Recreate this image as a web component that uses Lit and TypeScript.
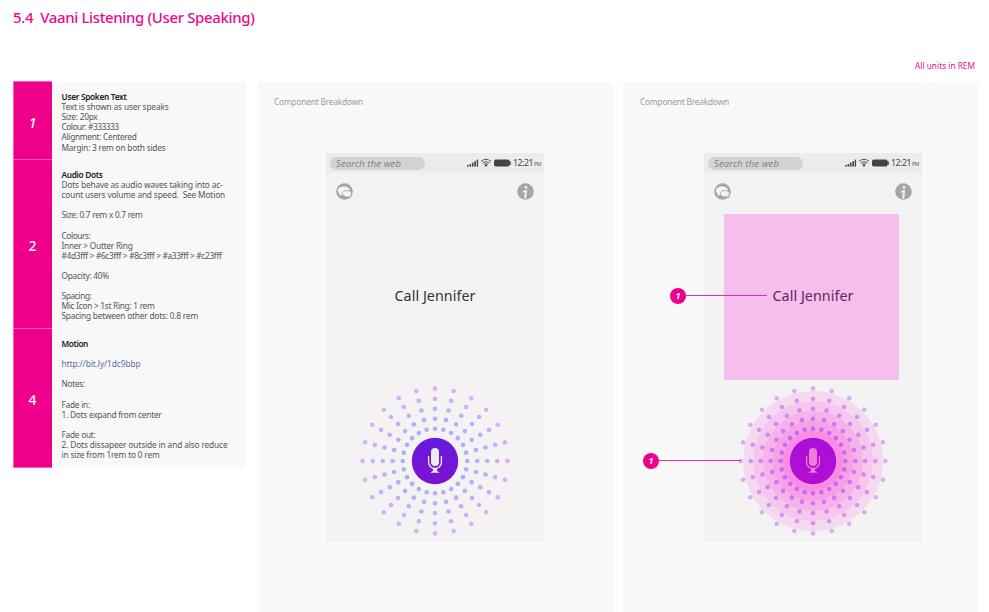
import { LitElement, html, svg, css } from "lit";
import { customElement, property } from "lit/decorators.js";

/** One line of text, tracked so that it spans the given width. */
@customElement("fit-text")
class FitText extends LitElement {
  @property({ type: Number }) w = 0;
  @property() text = "";
  static styles = css`
    :host { display: block; white-space: pre; }
    span { display: inline-block; }
  `;
  render() {
    return html`<span>${this.text}</span>`;
  }
  updated() {
    const s = this.renderRoot.querySelector("span") as HTMLElement;
    s.style.letterSpacing = "0px";
    const gap = (this.w - s.getBoundingClientRect().width) / this.text.length;
    s.style.letterSpacing = gap.toFixed(3) + "px";
  }
}

type Line = [string, number, string?];

@customElement("spec-row")
class SpecRow extends LitElement {
  @property() num = "";
  @property({ attribute: false }) lines: Line[] = [];
  static styles = css`
    :host { display: grid; grid-template-columns: 38px 1fr; box-sizing: border-box; }
    .num {
      background: #ef008c; color: #fff; display: flex; align-items: center; justify-content: center;
      font-size: 14px; font-weight: 500; box-sizing: border-box; padding-top: 3px;
      box-shadow: 0 0 0 1px #f562b6; clip-path: inset(-1px -0.4px -1px -0.4px);
    }
    .num.slant { font-style: italic; }
    .body { padding: 10.2px 0 0 10px; color: #555; font-size: 8.3px; line-height: 10.07px; }
    fit-text { height: 10.07px; }
    .head { font-weight: 600; color: #222; }
    .link { color: #5a6cae; }
  `;
  render() {
    return html`<div class="num ${this.num === "1" ? "slant" : ""}">${this.num}</div>
      <div class="body">
        ${this.lines.map(([t, w, c]) => html`<fit-text class=${c ?? ""} .text=${t} .w=${w}></fit-text>`)}
      </div>`;
  }
}

const RINGS = [
  { r: 32.3, c: "#4d3fff", tinted: "#c76aee" },
  { r: 42.3, c: "#6c3fff", tinted: "#cd78ee" },
  { r: 52.3, c: "#8c3fff", tinted: "#d286f0" },
  { r: 62.3, c: "#a33fff", tinted: "#d793f2" },
  { r: 72.4, c: "#c23fff", tinted: "#dea9f6" },
];

@customElement("audio-dots")
class AudioDots extends LitElement {
  @property({ type: Boolean }) halo = false;
  static styles = css`
    :host { display: block; width: 156px; height: 156px; }
    svg { display: block; }
  `;
  render() {
    const dots = RINGS.flatMap(({ r, c, tinted }) =>
      Array.from({ length: 24 }, (_, i) => {
        const a = (i * Math.PI) / 12;
        return svg`<circle cx=${r * Math.sin(a)} cy=${-r * Math.cos(a)} r="2.3"
          fill=${this.halo ? tinted : c} fill-opacity=${this.halo ? 1 : 0.4} />`;
      })
    );
    const body = this.halo ? "#f17bdb" : "#ececf0";
    return html`<svg width="156" height="156" viewBox="-78 -78 156 156">
      <defs>
        <linearGradient id="g" x1="0" y1="0" x2="0" y2="1">
          <stop offset="0" stop-color=${this.halo ? "#a90fdc" : "#661adf"} />
          <stop offset="1" stop-color=${this.halo ? "#b40cd2" : "#7d12cf"} />
        </linearGradient>
      </defs>
      ${this.halo
        ? [[70, "#f4daf0"], [60, "#f5c7ed"], [50, "#f6b2ea"], [40, "#f79fe7"], [30, "#f98de4"]].map(
            ([r, c]) => svg`<circle r=${r} fill=${c}/>`
          )
        : ""}
      ${dots}
      <circle r="23.2" fill="url(#g)" />
      <rect x="-4" y="-13" width="8" height="18" rx="4" fill=${body} />
      <path d="M-6.4 -5V1.3a6.4 6.2 0 0 0 12.8 0V-5" fill="none" stroke=${body} stroke-width="1.3" />
      <path d="M-2 7h4v2.8l2.7 1.9h-9.4l2.7-1.9z" fill=${body} />
    </svg>`;
  }
}

@customElement("phone-mock")
class PhoneMock extends LitElement {
  @property({ type: Boolean }) marked = false;
  static styles = css`
    :host { display: flex; flex-direction: column; position: relative; width: 218px; height: 389px; background: #f3f3f3; }
    .bar { height: 20px; background: #ececec; display: flex; align-items: center; padding-left: 4px; box-sizing: border-box; }
    .search {
      flex: none; width: 95px; height: 13px; border-radius: 7px; background: #d3d3d3; color: #5c5c5c; font-style: italic;
      font-size: 9.3px; font-weight: 300; line-height: 13px; padding-left: 6px; box-sizing: border-box; margin-right: 42px;
    }
    .bar svg { display: block; flex: none; }
    .time { flex: none; width: 20px; font-size: 8.8px; line-height: 14px; color: #444; }
    .pm { flex: none; font-size: 5px; line-height: 14px; color: #555; padding-top: 2px; margin-left: 1px; }
    .icons { display: flex; justify-content: space-between; padding: 10px 10px 0; height: 17px; }
    .spoken {
      display: flex; align-items: center; justify-content: center; height: 166px; margin: 14px 23px 0 20px;
      font-size: 14.3px; color: #333; box-sizing: border-box;
    }
    .spoken.on { background: #f6beec; color: #5f2759; }
    .spoken fit-text { margin: 0 0 2px 3px; line-height: 20px; }
    audio-dots { margin: 3px auto 0 31px; }
  `;
  render() {
    return html`<div class="bar">
        <div class="search"><fit-text .text=${"Search the web"} .w=${65}></fit-text></div>
        <svg width="46" height="12" viewBox="0 0 46 12">
          <g fill="#444">
            <rect x="0" y="8" width="1.6" height="1.6" /><rect x="2.5" y="7" width="1.6" height="2.6" />
            <rect x="4.9" y="5.6" width="1.6" height="4" /><rect x="7.3" y="4.2" width="1.6" height="5.4" />
            <rect x="9.7" y="2.6" width="1.4" height="7" />
            <rect x="27" y="2.6" width="15.6" height="7" rx="1.8" /><rect x="42.2" y="4.2" width="1.6" height="3.8" rx="0.6" />
            <circle cx="19" cy="8.6" r="1.1" />
          </g>
          <g fill="none" stroke="#444" stroke-width="0.9">
            <path d="M14 4.4q5-4.4 10 0" /><path d="M15.5 6q3.5-3 7 0" /><path d="M17 7.5q2-1.7 4 0" />
          </g>
        </svg>
        <fit-text class="time" .text=${"12:21"} .w=${20}></fit-text>
        <fit-text class="pm" .text=${"PM"} .w=${7}></fit-text>
      </div>
      <div class="icons">
        <svg width="17" height="17" viewBox="0 0 17 17">
          <circle cx="8.5" cy="8.5" r="8.3" fill="#a5a5a5" />
          <path d="M8 3.4c3.5 0 6 1.8 6 4.3s-2.5 4.2-6 4.2q-1 0-1.9-.2L3.4 13l.4-2.4Q1.8 9.6 1.8 7.7C1.8 5.2 4.5 3.4 8 3.4z" fill="#f3f3f3" />
          <path d="M10.9 7.5c2.7 0 4.6 1.3 4.6 3.2q0 1.3-1 2.2l.3 1.9-2.2-1.1q-.8.2-1.7.2c-2.7 0-4.6-1.3-4.6-3.2s1.9-3.2 4.6-3.2z" fill="#f3f3f3" stroke="#a5a5a5" stroke-width=".9" />
        </svg>
        <svg width="17" height="17" viewBox="0 0 17 17">
          <circle cx="8.5" cy="8.5" r="8.3" fill="#a5a5a5" />
          <circle cx="9" cy="4.3" r="1.4" fill="#f3f3f3" />
          <path d="M5.4 8.9Q7.6 6.4 10 7L9.3 15.6H7.2L7.8 8.9Q6.8 8.9 5.8 10z" fill="#f3f3f3" />
        </svg>
      </div>
      <div class="spoken ${this.marked ? "on" : ""}"><fit-text .text=${"Call Jennifer"} .w=${81}></fit-text></div>
      <audio-dots ?halo=${this.marked}></audio-dots>`;
  }
}

@customElement("app-root")
class AppRoot extends LitElement {
  static styles = css`
    :host {
      display: block; width: 989px; height: 612px; overflow: hidden; background: #fff; position: relative;
      font-family: "Noto Sans", "Open Sans", sans-serif;
    }
    header { height: 82px; display: flex; justify-content: space-between; box-sizing: border-box; padding: 6px 14px 0 13px; }
    .title { font-size: 15px; line-height: 22px; color: #ea0a8e; font-weight: 500; }
    .units { font-size: 8.3px; line-height: 12px; color: #ea0a8e; padding-top: 54px; }
    main { display: grid; grid-template-columns: 233px 355px 356px; column-gap: 11px; padding-left: 13px; height: 530px; }
    .spec { display: grid; grid-template-rows: 77px 168px 138px; row-gap: 1px; align-content: start; background: #f8f8f8; height: 386px; padding-left: 0.5px; box-sizing: border-box; }
    .panel { background: #f9f9f9; position: relative; margin-left: 1px; margin-right: -1px; }
    .caption { font-size: 8.3px; line-height: 12px; color: #999; padding: 14px 0 45px 16px; }
    phone-mock { margin-left: 68px; }
    .p2 phone-mock { margin-left: 81px; }
    .p2 { margin-left: 0; margin-right: 0; }
    .p2 .caption { padding-left: 17px; }
    .tag { position: absolute; display: flex; align-items: center; }
    .tag b {
      width: 16px; height: 16px; border-radius: 50%; background: #ef008c; color: #fff; font-size: 9px;
      line-height: 16px; text-align: center; font-style: italic;
    }
    .tag i { height: 1px; background: #f02aa0; }
    .t1 { left: 47px; top: 205.5px; } .t1 i { width: 81px; }
    .t2 { left: 20px; top: 370.5px; } .t2 i { width: 82px; }
  `;
  render() {
    const a: Line[] = [["User Spoken Text", 65, "head"], ["Text is shown as user speaks", 107], ["Size: 20px", 36], ["Colour: #333333", 57], ["Alignment: Centered", 75], ["Margin: 3 rem on both sides", 104]];
    const b: Line[] = [["Audio Dots", 41, "head"], ["Dots behave as audio waves taking into ac-", 161], ["count users volume and speed.  See Motion", 163.5], ["", 0], ["Size: 0.7 rem x 0.7 rem", 81], ["", 0], ["Colours:", 29], ["Inner > Outter Ring", 71], ["#4d3fff > #6c3fff > #8c3fff > #a33fff > #c23fff", 160], ["", 0], ["Opacity: 40%", 47.5], ["", 0], ["Spacing:", 30], ["Mic Icon > 1st Ring: 1 rem", 93], ["Spacing between other dots: 0.8 rem", 136.5]];
    const c: Line[] = [["Motion", 26.5, "head"], ["", 0], ["http://bit.ly/1dc9bbp", 79, "link"], ["", 0], ["Notes:", 23.5], ["", 0], ["Fade in:", 28.5], ["1. Dots expand from center", 100], ["", 0], ["Fade out:", 34], ["2. Dots dissapeer outside in and also reduce", 166], ["in size from 1rem to 0 rem", 98]];
    return html`<header>
        <fit-text class="title" .text=${"5.4  Vaani Listening (User Speaking)"} .w=${241.5}></fit-text>
        <fit-text class="units" .text=${"All units in REM"} .w=${60}></fit-text>
      </header>
      <main>
        <div class="spec">
          <spec-row num="1" .lines=${a}></spec-row>
          <spec-row num="2" .lines=${b}></spec-row>
          <spec-row num="4" .lines=${c}></spec-row>
        </div>
        <section class="panel">
          <fit-text class="caption" .text=${"Component Breakdown"} .w=${89}></fit-text>
          <phone-mock></phone-mock>
        </section>
        <section class="panel p2">
          <fit-text class="caption" .text=${"Component Breakdown"} .w=${89}></fit-text>
          <phone-mock marked></phone-mock>
          <div class="tag t1"><b>1</b><i></i></div>
          <div class="tag t2"><b>1</b><i></i></div>
        </section>
      </main>`;
  }
}
